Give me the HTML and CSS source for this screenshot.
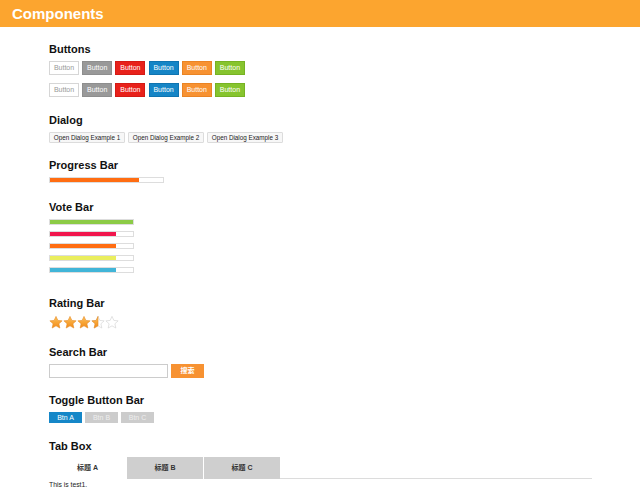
FILE: index.html
```html
<!DOCTYPE html>
<html>
<head>
<meta charset="utf-8">
<link rel="stylesheet" href="styles.css">
</head>
<body>
<header class="top">Components</header>
<main class="main">
  <section class="sec sec-buttons">
    <h2 class="title">Buttons</h2>
    <div class="btn-row">
      <span class="btn btn-white">Button</span>
      <span class="btn btn-gray">Button</span>
      <span class="btn btn-red">Button</span>
      <span class="btn btn-blue">Button</span>
      <span class="btn btn-orange">Button</span>
      <span class="btn btn-green">Button</span>
    </div>
    <div class="btn-row">
      <span class="btn btn-white">Button</span>
      <span class="btn btn-gray">Button</span>
      <span class="btn btn-red">Button</span>
      <span class="btn btn-blue">Button</span>
      <span class="btn btn-orange">Button</span>
      <span class="btn btn-green">Button</span>
    </div>
  </section>
  <section class="sec">
    <h2 class="title">Dialog</h2>
    <div class="dlg-row">
      <span class="dlg">Open Dialog Example 1</span>
      <span class="dlg">Open Dialog Example 2</span>
      <span class="dlg">Open Dialog Example 3</span>
    </div>
  </section>
  <section class="sec sec-progress">
    <h2 class="title">Progress Bar</h2>
    <div class="progress"><div class="fill fill-orange" style="width:79%"></div></div>
  </section>
  <section class="sec">
    <h2 class="title">Vote Bar</h2>
    <div class="votes">
      <div class="vote"><div class="fill fill-green" style="width:100%"></div></div>
      <div class="vote"><div class="fill fill-pink" style="width:79%"></div></div>
      <div class="vote"><div class="fill fill-orange" style="width:79%"></div></div>
      <div class="vote"><div class="fill fill-yellow" style="width:79%"></div></div>
      <div class="vote"><div class="fill fill-cyan" style="width:79%"></div></div>
    </div>
  </section>
  <section class="sec sec-rating">
    <h2 class="title">Rating Bar</h2>
    <div class="stars">
      <svg class="star" viewBox="0 0 24 24"><defs><linearGradient id="g" x1="0" y1="0" x2="0" y2="1"><stop offset="0" stop-color="#fdc25a"/><stop offset="1" stop-color="#f28a17"/></linearGradient><linearGradient id="h" x1="0" y1="0" x2="1" y2="0"><stop offset="0.5" stop-color="#f5a030"/><stop offset="0.5" stop-color="#ffffff"/></linearGradient></defs><path d="M12 1.5l3.2 6.9 7.3.8-5.5 5 1.6 7.3L12 17.7l-6.6 3.8 1.6-7.3-5.5-5 7.3-.8z" fill="url(#g)" stroke="#e58a25" stroke-width="1" stroke-linejoin="round"/></svg>
      <svg class="star" viewBox="0 0 24 24"><path d="M12 1.5l3.2 6.9 7.3.8-5.5 5 1.6 7.3L12 17.7l-6.6 3.8 1.6-7.3-5.5-5 7.3-.8z" fill="url(#g)" stroke="#e58a25" stroke-width="1" stroke-linejoin="round"/></svg>
      <svg class="star" viewBox="0 0 24 24"><path d="M12 1.5l3.2 6.9 7.3.8-5.5 5 1.6 7.3L12 17.7l-6.6 3.8 1.6-7.3-5.5-5 7.3-.8z" fill="url(#g)" stroke="#e58a25" stroke-width="1" stroke-linejoin="round"/></svg>
      <svg class="star" viewBox="0 0 24 24"><path d="M12 1.5l3.2 6.9 7.3.8-5.5 5 1.6 7.3L12 17.7l-6.6 3.8 1.6-7.3-5.5-5 7.3-.8z" fill="#fff" stroke="#cfcfcf" stroke-width="1" stroke-linejoin="round"/><path d="M12 1.5 L12 17.7 L5.4 21.5 L7 14.2 L1.5 9.2 L8.8 8.4 Z" fill="url(#g)" stroke="#e58a25" stroke-width="1" stroke-linejoin="round"/></svg>
      <svg class="star" viewBox="0 0 24 24"><path d="M12 1.5l3.2 6.9 7.3.8-5.5 5 1.6 7.3L12 17.7l-6.6 3.8 1.6-7.3-5.5-5 7.3-.8z" fill="#fff" stroke="#cfcfcf" stroke-width="1" stroke-linejoin="round"/></svg>
    </div>
  </section>
  <section class="sec">
    <h2 class="title">Search Bar</h2>
    <div class="search">
      <span class="search-input"></span>
      <span class="search-btn">搜索</span>
    </div>
  </section>
  <section class="sec sec-toggle">
    <h2 class="title">Toggle Button Bar</h2>
    <div class="toggles">
      <span class="tgl tgl-on">Btn A</span>
      <span class="tgl">Btn B</span>
      <span class="tgl">Btn C</span>
    </div>
  </section>
  <section class="sec sec-tabs">
    <h2 class="title">Tab Box</h2>
    <div class="tabs">
      <span class="tab tab-on">标题 A</span>
      <span class="tab">标题 B</span>
      <span class="tab">标题 C</span>
      <span class="tab-rest"></span>
    </div>
    <p class="tab-body">This is test1.</p>
  </section>
</main>
</body>
</html>
```
FILE: styles.css
```css
* { box-sizing: border-box; }
html, body { margin: 0; padding: 0; background: #fff; }
body { font-family: "Liberation Sans", Arial, "Noto Sans CJK SC", sans-serif; color: #111; }
.top {
  height: 27px;
  background: #fca52f;
  color: #fff;
  font-weight: bold;
  font-size: 15px;
  line-height: 27px;
  padding-left: 12px;
}
.main { padding-left: 49px; padding-top: 16px; width: 592px; }
.sec { margin-bottom: 16px; }
.sec-buttons { margin-bottom: 17px; }
.sec-progress { margin-bottom: 18px; }
.sec-rating { margin-top: 24px; }
.sec-toggle { margin-bottom: 17px; }
.title { margin: 0 0 5px; font-size: 11px; line-height: 13px; font-weight: bold; color: #111; }
.sec-tabs .title { margin-bottom: 4px; }
.btn-row { display: flex; gap: 3.2px; margin-bottom: 8px; }
.btn-row:last-child { margin-bottom: 0; }
.btn {
  width: 30px; height: 14px; font-size: 7px; line-height: 12px; text-align: center;
  border: 1px solid; color: #fff;
}
.btn-white { background: #fff; border-color: #d6d6d6; color: #999; }
.btn-gray { background: #999; border-color: #8e8e8e; }
.btn-red { background: #e8211b; border-color: #d41b15; }
.btn-blue { background: #1585c6; border-color: #0f74b0; }
.btn-orange { background: #f79232; border-color: #ea8424; }
.btn-green { background: #86c42e; border-color: #77b223; }
.dlg-row { display: flex; gap: 3px; }
.dlg {
  width: 76px; height: 11px; font-size: 6.3px; line-height: 9px; color: #222; text-align: center;
  background: #f7f7f7; border: 1px solid #dcdcdc; border-radius: 1px; white-space: nowrap;
}
.progress, .vote {
  width: 115px; height: 6px; border: 1px solid #ddd; background: #fff; padding: 0;
}
.vote { width: 85px; }
.votes { display: flex; flex-direction: column; gap: 6px; }
.fill { height: 100%; }
.fill-orange { background: #ff6d12; }
.fill-green { background: #8ccb46; }
.fill-pink { background: #f1164d; }
.fill-yellow { background: #eaee5e; }
.fill-cyan { background: #41b5d8; }
.stars { display: flex; gap: 0; height: 15px; }
.star { width: 14px; height: 15px; display: block; }
.search { display: flex; gap: 3px; }
.search-input { width: 119px; height: 14px; border: 1px solid #ccc; background: #fff; }
.search-btn {
  width: 33px; height: 14px; background: #f79232; color: #fff; font-size: 7px;
  line-height: 14px; text-align: center; font-weight: bold;
}
.toggles { display: flex; gap: 3px; }
.tgl {
  width: 33px; height: 11px; font-size: 7px; line-height: 11px; text-align: center;
  background: #ccc; color: #eee;
}
.tgl-on { background: #1587c8; color: #fff; }
.tabs { display: flex; width: 543px; }
.tab {
  width: 77px; height: 22px; line-height: 22px; text-align: center; font-size: 7px;
  font-weight: bold; background: #cfcfcf; color: #333; border-left: 1px solid #fff;
}
.tab-on { background: #fff; border-left: none; }
.tab-rest { flex: 1; border-bottom: 1px solid #dcdcdc; }
.tab-body { margin: 2px 0 0; font-size: 6.8px; color: #222; }
```
